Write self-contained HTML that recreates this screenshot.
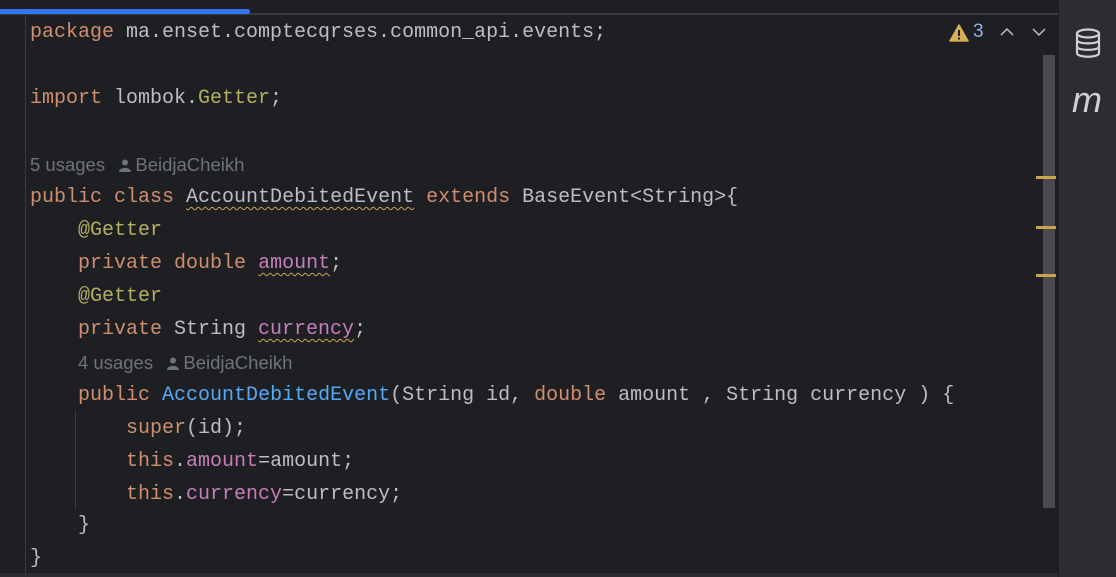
<!DOCTYPE html>
<html><head><style>
body{margin:0;width:1116px;height:577px;background:#1e1f22;overflow:hidden;position:relative;font-family:"Liberation Mono",monospace}
.l{position:absolute;left:30px;font-size:20px;line-height:33px;height:33px;color:#bcbec4;white-space:pre}
.k{color:#cf8e6d}.a{color:#b3ae60}.f{color:#c77dbb}.m{color:#56a8f5}
.w{text-decoration:underline wavy #c9a54a;text-decoration-thickness:1px;text-underline-offset:4px}
.u{position:absolute;font-family:"Liberation Sans",sans-serif;font-size:18.5px;color:#6f737a;line-height:33px;white-space:pre}
.u svg{vertical-align:-1px;margin:0 4px 0 4px}
</style></head><body>
<div style="position:absolute;left:0;top:13px;width:1058px;height:2px;background:#393b40"></div>
<div style="position:absolute;left:0;top:9px;width:250px;height:5px;background:#3574f0;border-radius:0 3px 3px 0"></div>
<div style="position:absolute;left:25px;top:15px;width:1px;height:562px;background:#393b40"></div>
<div style="position:absolute;left:0;top:573px;width:1058px;height:4px;background:#2b2d30"></div>
<div style="position:absolute;left:1058px;top:0;width:58px;height:577px;background:#2b2d30;border-left:1px solid #1e1f22"></div>
<div style="position:absolute;left:1043px;top:55px;width:12px;height:453px;background:#4a4b4e"></div>
<div style="position:absolute;left:1036px;top:176px;width:20px;height:3px;background:#c9a54a"></div>
<div style="position:absolute;left:1036px;top:226px;width:20px;height:3px;background:#c9a54a"></div>
<div style="position:absolute;left:1036px;top:274px;width:20px;height:3px;background:#c9a54a"></div>
<div style="position:absolute;left:75px;top:410px;width:1px;height:100px;background:#393b40"></div>
<svg style="position:absolute;left:949px;top:24px" width="20" height="18" viewBox="0 0 20 18"><path d="M10 1 L19 17 H1 Z" fill="#d6ae55" stroke="#d6ae55" stroke-linejoin="round" stroke-width="1.5"/><rect x="9" y="6" width="2" height="6" fill="#1e1f22"/><rect x="9" y="13.5" width="2" height="2" fill="#1e1f22"/></svg>
<div style="position:absolute;left:973px;top:21px;font-family:'Liberation Sans',sans-serif;font-size:19px;color:#8ab4e6">3</div>
<svg style="position:absolute;left:999px;top:27px" width="16" height="10"><path d="M2 8 L8 2 L14 8" fill="none" stroke="#bcbec4" stroke-width="1.5"/></svg>
<svg style="position:absolute;left:1031px;top:27px" width="16" height="10"><path d="M2 2 L8 8 L14 2" fill="none" stroke="#bcbec4" stroke-width="1.5"/></svg>
<svg style="position:absolute;left:1074px;top:28px" width="28" height="32" viewBox="0 0 28 32"><g fill="none" stroke="#ced0d6" stroke-width="2.2"><ellipse cx="14" cy="5.5" rx="11" ry="4"/><path d="M3 5.5 V25 C3 30 25 30 25 25 V5.5"/><path d="M3 12 C3 16.5 25 16.5 25 12"/><path d="M3 18.5 C3 23 25 23 25 18.5"/></g></svg>
<div style="position:absolute;left:1072px;top:79px;font-family:'Liberation Sans',sans-serif;font-style:italic;font-size:36px;color:#ced0d6">m</div>
<div class="l" style="top:16px"><span class="k">package</span> ma.enset.comptecqrses.common_api.events;</div>
<div class="l" style="top:82px"><span class="k">import</span> lombok.<span class="a">Getter</span>;</div>
<div class="u" style="left:30px;top:148px">5 usages  <svg width="12" height="13" viewBox="0 0 12 13"><circle cx="6" cy="3.5" r="3" fill="#6f737a"/><path d="M0 13 C0 7.5 12 7.5 12 13 Z" fill="#6f737a"/></svg>BeidjaCheikh</div>
<div class="l" style="top:181px"><span class="k">public class</span> <span class="w">AccountDebitedEvent</span> <span class="k">extends</span> BaseEvent&lt;String&gt;{</div>
<div class="l" style="top:214px">    <span class="a">@Getter</span></div>
<div class="l" style="top:247px">    <span class="k">private double</span> <span class="f w">amount</span>;</div>
<div class="l" style="top:280px">    <span class="a">@Getter</span></div>
<div class="l" style="top:313px">    <span class="k">private</span> String <span class="f w">currency</span>;</div>
<div class="u" style="left:78px;top:346px">4 usages  <svg width="12" height="13" viewBox="0 0 12 13"><circle cx="6" cy="3.5" r="3" fill="#6f737a"/><path d="M0 13 C0 7.5 12 7.5 12 13 Z" fill="#6f737a"/></svg>BeidjaCheikh</div>
<div class="l" style="top:379px">    <span class="k">public</span> <span class="m">AccountDebitedEvent</span>(String id, <span class="k">double</span> amount , String currency ) {</div>
<div class="l" style="top:412px">        <span class="k">super</span>(id);</div>
<div class="l" style="top:445px">        <span class="k">this</span>.<span class="f">amount</span>=amount;</div>
<div class="l" style="top:478px">        <span class="k">this</span>.<span class="f">currency</span>=currency;</div>
<div class="l" style="top:509px">    }</div>
<div class="l" style="top:542px">}</div>
</body></html>
